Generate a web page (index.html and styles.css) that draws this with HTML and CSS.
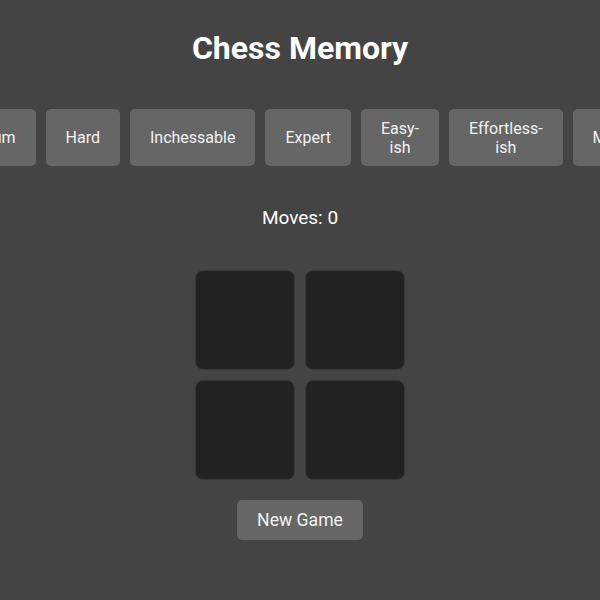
FILE: index.html
```html
<!DOCTYPE html>
<html lang="en">
<head>
<meta charset="utf-8">
<title>Chess Memory</title>
<link rel="stylesheet" href="styles.css">
</head>
<body>
<div class="app">
  <h1 class="title">Chess Memory</h1>
  <div class="levels">
    <button class="btn level">Medium</button>
    <button class="btn level">Hard</button>
    <button class="btn level">Inchessable</button>
    <button class="btn level">Expert</button>
    <button class="btn level">Easy-ish</button>
    <button class="btn level">Effortless-ish</button>
    <button class="btn level">Master</button>
  </div>
  <div class="moves">Moves: 0</div>
  <div class="board">
    <div class="card"></div>
    <div class="card"></div>
    <div class="card"></div>
    <div class="card"></div>
  </div>
  <button class="btn new-game">New Game</button>
</div>
</body>
</html>
```
FILE: styles.css
```css
html, body {
  margin: 0;
  padding: 0;
  background: #444444;
  height: 100%;
}
body {
  font-family: Roboto, "Liberation Sans", sans-serif;
  color: #ffffff;
  overflow: hidden;
}
.app {
  display: flex;
  flex-direction: column;
  align-items: center;
  padding-top: 30px;
  width: 600px;
}
.title {
  margin: 0 0 41px;
  font-size: 32px;
  font-weight: 700;
  line-height: 37.5px;
  color: #ffffff;
}
.levels {
  display: flex;
  justify-content: center;
  gap: 10px;
  width: 602px;
  height: 57px;
}
.btn {
  font-family: Roboto, "Liberation Sans", sans-serif;
  background: #666666;
  color: #f2f2f2;
  border: none;
  border-radius: 5px;
  padding: 10px 20px;
  cursor: pointer;
}
.level {
  font-size: 16px;
  line-height: 19px;
  flex-shrink: 1;
  width: min-content;
}
.moves {
  margin-top: 41px;
  font-size: 19px;
  line-height: 22px;
  color: #ffffff;
}
.board {
  margin-top: 41px;
  display: grid;
  grid-template-columns: 100px 100px;
  grid-auto-rows: 100px;
  gap: 10px;
}
.card {
  background: #222222;
  border: 1px solid #383838;
  border-radius: 8px;
  box-sizing: border-box;
}
.new-game {
  margin-top: 20px;
  font-size: 17.6px;
  line-height: 20px;
  white-space: nowrap;
  padding: 10px 20px;
}
```
